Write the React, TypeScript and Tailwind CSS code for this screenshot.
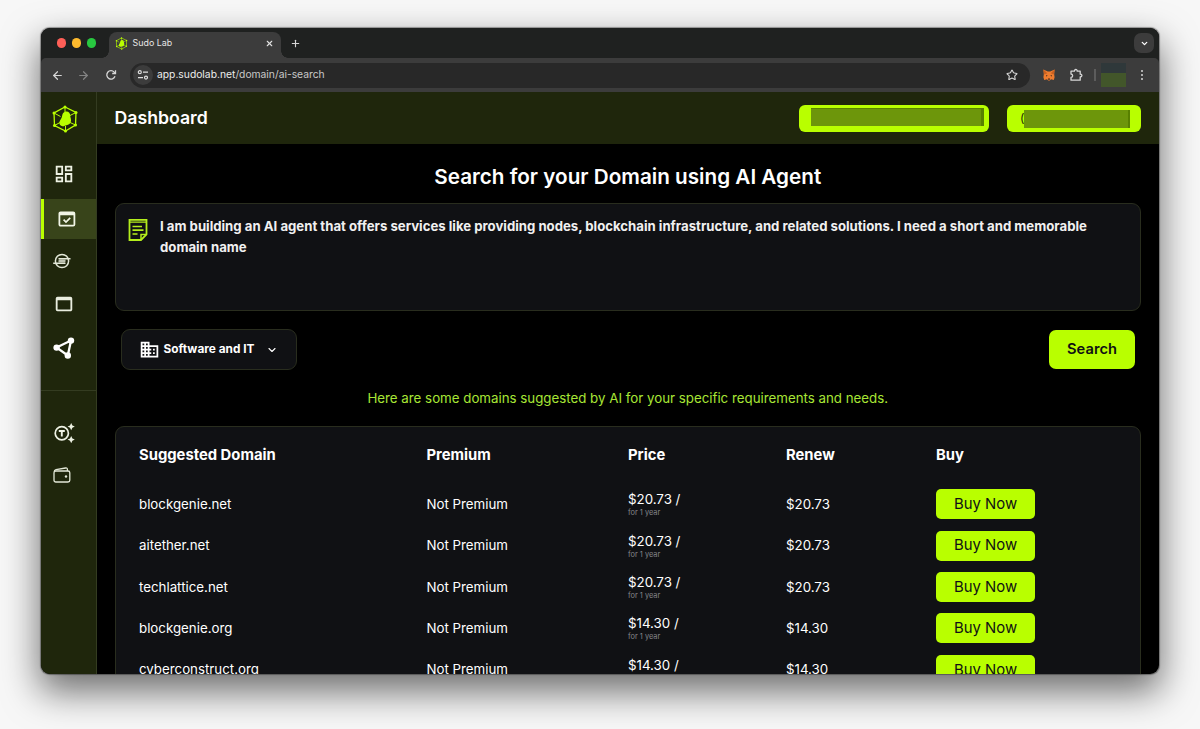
import { ReactNode } from "react";
import clsx from "clsx";
import { MdBusiness, MdOutlineDashboard, MdOutlineWebAsset } from "react-icons/md";
import { ArrowLeft, ArrowRight, ChevronDown, Plus, Star, X } from "lucide-react";

const domains = [
    { name: "blockgenie.net", premium: false, price: "$20.73", renew: "$20.73" },
    { name: "aitether.net", premium: false, price: "$20.73", renew: "$20.73" },
    { name: "techlattice.net", premium: false, price: "$20.73", renew: "$20.73" },
    { name: "blockgenie.org", premium: false, price: "$14.30", renew: "$14.30" },
    { name: "cyberconstruct.org", premium: false, price: "$14.30", renew: "$14.30" },
]

function Logo({ className }: { className: string }) {
    return (
        <svg viewBox="0 0 26 28" className={className} fill="none" stroke="#b9ff00" strokeWidth="1.3">
            <path d="M13 2 L24 7.5 L23.5 20 L13.5 26 L2.5 20.5 L2 8 Z" />
            <path d="M13 2V7M24 7.5L18 10.5M23.5 20L18 17.5M13.5 26V21M2.5 20.5L8 17.5M2 8L8.5 11.5" strokeWidth="1" />
            <path d="M13.5 6.5C16.500 6 18.200 7.800 18.200 10.500C18.200 12.300 19.200 13.500 19 16C18.800 18.500 16.500 20 14.500 20.200C13 20.400 12.300 21.500 10.300 21.200C7.800 20.800 7 18.800 7.500 16.800C8 14.800 9.600 13.800 10 11.500C10.300 9 11.200 7 13.500 6.500Z" fill="#b9ff00" stroke="none" />
            <g fill="#b9ff00" stroke="none">
                <circle cx="13" cy="2" r="1.5" />
                <circle cx="24" cy="7.5" r="1.5" />
                <circle cx="23.5" cy="20" r="1.5" />
                <circle cx="13.5" cy="26" r="1.5" />
                <circle cx="2.5" cy="20.5" r="1.5" />
                <circle cx="2" cy="8" r="1.5" />
            </g>
        </svg>
    )
}

function ReloadIcon() {
    return (
        <svg viewBox="0 0 12 12" className="size-3" fill="none" stroke="#d6d6d6" strokeWidth="1.3">
            <path d="M10 7.2A4.2 4.2 0 1 1 9.2 3.2L10.3 4.3" />
            <path d="M10.5 1.2V4.5H7.2" />
        </svg>
    )
}

function TuneIcon() {
    return (
        <svg viewBox="0 0 12 12" className="size-3" fill="none" stroke="#dedede" strokeWidth="1.2">
            <circle cx="2.8" cy="3.2" r="1.5" />
            <path d="M6 3.2H11M1 8.6H6" />
            <circle cx="9" cy="8.6" r="1.5" />
        </svg>
    )
}

function FoxIcon() {
    return (
        <svg viewBox="0 0 12 12" className="size-3">
            <path d="M.4.6 4.8 2.6H7.2L11.6.6 11.2 5.5 11.6 8.2 10.8 11 8 10.3 6.8 11.4H5.2L4 10.3 1.2 11 .4 8.2.8 5.5Z" fill="#ee7c2f" />
            <path d="M.4.6 4.3 4.2 1.2 5.4ZM11.6.6 7.7 4.2 10.8 5.4Z" fill="#c9601f" />
            <path d="M3 6 4.8 6.8 3.2 7.4ZM9 6 7.2 6.8 8.8 7.4Z" fill="#49301f" />
            <path d="M5 9.6H7L6.8 10.8H5.2Z" fill="#3a2a20" />
        </svg>
    )
}

function PuzzleIcon() {
    return (
        <svg viewBox="0 0 14 14" className="size-3.5" fill="none" stroke="#d6d6d6" strokeWidth="1.3" strokeLinejoin="round">
            <path d="M2 3.2H5.4C5.4.9 8.2.9 8.2 3.2H11.2V6.2C13.5 6.2 13.5 9 11.2 9V12.2H2V9.4C4.2 9.2 4.2 6.2 2 6Z" />
        </svg>
    )
}

function DomainCheckIcon() {
    return (
        <svg viewBox="0 0 18 16" className="h-4 w-[18px]" fill="none" stroke="#f1f5e6" strokeWidth="1.8">
            <rect x="1.4" y="1.4" width="15" height="13.2" rx="1.2" />
            <path d="M1 3H17" strokeWidth="2.6" />
            <path d="M5.6 8.6 8 11 12.2 6.8" strokeWidth="1.7" />
        </svg>
    )
}

function TokenIcon() {
    return (
        <svg viewBox="0 0 20 16" className="h-4 w-5" fill="none" stroke="#e3e8d8" strokeWidth="1.5">
            <circle cx="10" cy="8" r="6.6" />
            <path d="M6.5 5.8H18.5M6.5 8H13.5M1.2 10.2H13.5" />
            <path d="M7 6.9H13.5M6.5 9.1H13" strokeWidth="1" opacity=".6" />
        </svg>
    )
}

function NodesIcon() {
    return (
        <svg viewBox="0 0 22 22" className="size-[22px]" fill="none" stroke="#fff" strokeWidth="2.3">
            <path d="M3.5 10.5 18 3.5 14.8 18.5Z" />
            <g fill="#fff" stroke="none">
                <circle cx="3.6" cy="10.6" r="3.2" />
                <circle cx="18" cy="3.6" r="3.2" />
                <circle cx="14.8" cy="18.5" r="3.2" />
            </g>
        </svg>
    )
}

function TokenSparkleIcon() {
    return (
        <svg viewBox="0 0 21 20" className="h-5 w-[21px]" fill="none" stroke="#eef2e4" strokeWidth="1.7">
            <circle cx="7.8" cy="10.2" r="6.6" />
            <path d="M4.8 8H10.8M7.8 8V13.6" strokeWidth="1.9" />
            <path d="M17.2 0 18.4 2.4 20.8 3.6 18.4 4.8 17.2 7.2 16 4.8 13.6 3.6 16 2.4ZM17.2 13 18.4 15.4 20.8 16.6 18.4 17.8 17.2 20.2 16 17.8 13.6 16.6 16 15.4Z" fill="#eef2e4" stroke="none" />
        </svg>
    )
}

function WalletIcon() {
    return (
        <svg viewBox="0 0 18 16" className="h-4 w-[18px]" fill="none" stroke="#e3e8d8" strokeWidth="1.3" strokeLinejoin="round">
            <rect x="1" y="4" width="15.8" height="11" rx="1.8" />
            <path d="M1.3 4.6C1.3 3.4 1.8 3 3 2.7L12.6 1C13.8.8 14.4 1.3 14.4 2.4V4" />
            <circle cx="13" cy="9.5" r="1.2" fill="#e3e8d8" stroke="none" />
        </svg>
    )
}

function NoteIcon() {
    return (
        <svg viewBox="0 0 20 24" className="h-6 w-5 shrink-0" fill="none" stroke="#b4ee1c" strokeWidth="1.8">
            <path d="M1.5 1.8H18.5V16.5L13 22H1.5Z" />
            <path d="M1.5 4.2H18.5" strokeWidth="1.3" />
            <path d="M13 22V16.5H18.5" strokeWidth="1.5" />
            <path d="M4.5 8.5H14M4.5 12.2H15.5M4.5 16H9.5" strokeWidth="1.7" />
        </svg>
    )
}

function NavItem({ active, className, children }: { active?: boolean; className?: string; children: ReactNode }) {
    return (
        <div className={clsx("flex items-center", active ? "bg-[#38441a] border-l-[3px] border-[#b9ff00]" : "", className)}>
            {children}
        </div>
    )
}

function BrowserBar() {
    return (
        <div className="bg-[#1f2120]">
            <div className="flex h-[30px] pl-[15.5px] pr-[5px]">
                <div className="flex items-center gap-[5.5px]">
                    <span className="size-[9.5px] rounded-full bg-[#fe5f57]" />
                    <span className="size-[9.5px] rounded-full bg-[#febb2e]" />
                    <span className="size-[9.5px] rounded-full bg-[#28c840]" />
                </div>
                <div className="relative mt-1 ml-[12.5px] flex h-[26px] w-[172px] items-center rounded-t-lg bg-[#3c3c3c] px-[6px] pb-[4px]">
                    <span className="absolute bottom-0 -left-[7px] size-[7px] bg-[radial-gradient(circle_at_0_0,transparent_6.5px,#3c3c3c_7px)]" />
                    <span className="absolute -right-[7px] bottom-0 size-[7px] bg-[radial-gradient(circle_at_100%_0,transparent_6.5px,#3c3c3c_7px)]" />
                    <Logo className="size-[13px]" />
                    <span className="ml-[5px] text-[8.9px] text-[#e6e6e6]">Sudo Lab</span>
                    <X className="mr-px ml-auto size-[9px] text-[#e0e0e0]" strokeWidth={3} />
                </div>
                <div className="ml-[9px] flex items-center">
                    <Plus className="size-[11px] text-[#d6d6d6]" strokeWidth={2.5} />
                </div>
                <div className="mt-[5px] ml-auto flex size-5 items-center justify-center rounded-[7px] bg-[#3c3c3c]">
                    <ChevronDown className="size-[9px] text-white" strokeWidth={3.5} />
                </div>
            </div>
            <div className="flex h-[34px] items-center rounded-t-[5px] bg-[#3c3c3c] pl-[10px]">
                <ArrowLeft className="size-[13px] text-[#d6d6d6]" strokeWidth={2.2} />
                <ArrowRight className="ml-[13px] size-[13px] text-[#848484]" strokeWidth={2.2} />
                <div className="ml-[15px]"><ReloadIcon /></div>
                <div className="ml-[13px] flex h-[25px] w-[900px] items-center rounded-full bg-[#282828] pl-[3px] pr-[12px]">
                    <span className="flex size-5 items-center justify-center rounded-full bg-[#3c3c3c]"><TuneIcon /></span>
                    <span className="ml-1 text-[10.3px] text-[#c8c8c8]"><span className="text-[#ececec]">app.sudolab.net</span>/domain/ai-search</span>
                    <Star className="ml-auto size-3 text-[#d6d6d6]" strokeWidth={2.2} />
                </div>
                <div className="ml-[13px]"><FoxIcon /></div>
                <div className="ml-[14px]"><PuzzleIcon /></div>
                <span className="ml-[11px] h-3 w-[1.5px] bg-[#5c5c5c]" />
                <div className="ml-[5px] h-6 w-[25px] bg-[#2f383a]">
                    <div className="mt-[10px] h-[14px] bg-[#42562a]" />
                </div>
                <div className="ml-[6px] flex w-[20px] flex-col items-center gap-[2px]">
                    <span className="size-[2px] rounded-full bg-[#d6d6d6]" />
                    <span className="size-[2px] rounded-full bg-[#d6d6d6]" />
                    <span className="size-[2px] rounded-full bg-[#d6d6d6]" />
                </div>
            </div>
        </div>
    )
}

function Sidebar() {
    return (
        <aside className="w-[56px] shrink-0 border-r-[1.5px] border-[#343c21] bg-[#1f260c]">
            <div className="flex h-[57px] items-start pl-[11px] pt-[13px]">
                <Logo className="h-7 w-[26px]" />
            </div>
            <NavItem className="h-[50px] pl-3"><MdOutlineDashboard className="size-[22px] text-[#eef2e4]" /></NavItem>
            <NavItem active className="h-10 pl-[14px]"><DomainCheckIcon /></NavItem>
            <NavItem className="h-11 pl-[11px]"><TokenIcon /></NavItem>
            <NavItem className="h-[42px] pl-3"><MdOutlineWebAsset className="size-[22px] text-[#e9eddf]" /></NavItem>
            <NavItem className="h-[46px] pl-3"><NodesIcon /></NavItem>
            <div className="mt-[19px] border-t border-[#343c21] pt-[22px]">
                <NavItem className="h-10 pl-[13px]"><TokenSparkleIcon /></NavItem>
                <NavItem className="h-[44px] pl-3"><WalletIcon /></NavItem>
            </div>
        </aside>
    )
}

function Header() {
    return (
        <header className="flex h-[51.5px] items-center justify-between bg-[#1f260c] pt-[1.5px] pl-[17.5px] pr-[18px]">
            <h1 className="text-[17.7px] font-semibold text-white">Dashboard</h1>
            <div className="flex gap-[18px]">
                <div className="h-[26.5px] w-[190px] rounded-md bg-[#b9ff00] pl-3 pt-[3px]">
                    <div className="h-[18px] w-[173px] border-t border-r-[3px] border-[#588000] bg-[#6d960b]" />
                </div>
                <div className="flex h-[26.5px] w-[134px] items-start rounded-md bg-[#b9ff00] pl-[13px] pt-[5px]">
                    <span className="w-1 text-[12px] leading-4 text-[#1f260c]">(</span>
                    <div className="h-[18px] w-[106px] border-r-2 border-[#588000] bg-[#6d960b]" />
                </div>
            </div>
        </header>
    )
}

function SearchPanel() {
    return (
        <>
            <h2 className="pt-[19.5px] text-center text-[20.7px] leading-7 font-semibold text-white">Search for your Domain using AI Agent</h2>
            <div className="mt-3 flex h-[108px] gap-3 rounded-[9px] border border-[#292d1e] bg-[#101114] pt-[13.5px] pl-[12.5px] pr-10">
                <NoteIcon />
                <p className="-mt-[2px] text-[13.18px] leading-[21px] font-bold text-[#f0f0f0]">
                    I am building an AI agent that offers services like providing nodes, blockchain infrastructure, and related solutions. I need a short and memorable domain name
                </p>
            </div>
            <div className="mt-[18px] flex items-center justify-between px-[6px]">
                <button className="flex h-[41px] w-[176.5px] items-center rounded-[9px] border border-[#292d1e] bg-[#101114] pl-[17.5px] text-white">
                    <MdBusiness className="size-[21px]" />
                    <span className="ml-[3.5px] text-[11.85px] font-bold">Software and IT</span>
                    <ChevronDown className="ml-3 size-3" strokeWidth={2.2} />
                </button>
                <button className="h-[39px] w-[86px] rounded-[7px] bg-[#b9ff00] text-[14.7px] font-semibold text-[#101114]">Search</button>
            </div>
            <p className="mt-[18px] text-center text-[13.3px] leading-5 text-[#a8e635]">Here are some domains suggested by AI for your specific requirements and needs.</p>
        </>
    )
}

function DomainTable() {
    return (
        <div className="mt-[18px] h-[420px] rounded-[9px] border border-[#292d1e] bg-[#101114] pl-[23.5px] text-white">
            <div className="grid h-[57px] grid-cols-[287.5px_201.5px_158px_150px_1fr] items-center text-[14.8px] font-bold">
                <span>Suggested Domain</span>
                <span>Premium</span>
                <span>Price</span>
                <span>Renew</span>
                <span>Buy</span>
            </div>
            {domains.map(domain => (
                <div key={domain.name} className="grid h-[41.4px] grid-cols-[287.5px_201.5px_158px_150px_1fr] items-center text-[13.3px]">
                    <span>{domain.name}</span>
                    <span>{domain.premium ? "Premium" : "Not Premium"}</span>
                    <div>
                        <p className="leading-4">{domain.price} /</p>
                        <p className="text-[7.4px] leading-[11px] text-[#85868a]">for 1 year</p>
                    </div>
                    <span>{domain.renew}</span>
                    <button className="-mt-px h-[30px] w-[99px] rounded-[5px] bg-[#b9ff00] text-[14.9px] text-[#101114]">Buy Now</button>
                </div>
            ))}
        </div>
    )
}

export default function App() {
    return (
        <div className="h-[729px] w-[1200px] overflow-hidden bg-[#f7f7f7] pl-[41px] pt-[28px] font-['Inter',sans-serif]">
            <div className="flex h-[646px] w-[1118px] flex-col overflow-hidden rounded-[9px] bg-black shadow-[0_0_1px_0.5px_rgba(0,0,0,0.35),0_16px_36px_2px_rgba(0,0,0,0.55)]">
                <BrowserBar />
                <div className="flex min-h-0 flex-1">
                    <Sidebar />
                    <div className="min-w-0 flex-1">
                        <Header />
                        <main className="pl-[17.5px] pr-[18px]">
                            <SearchPanel />
                            <DomainTable />
                        </main>
                    </div>
                </div>
            </div>
        </div>
    )
}
